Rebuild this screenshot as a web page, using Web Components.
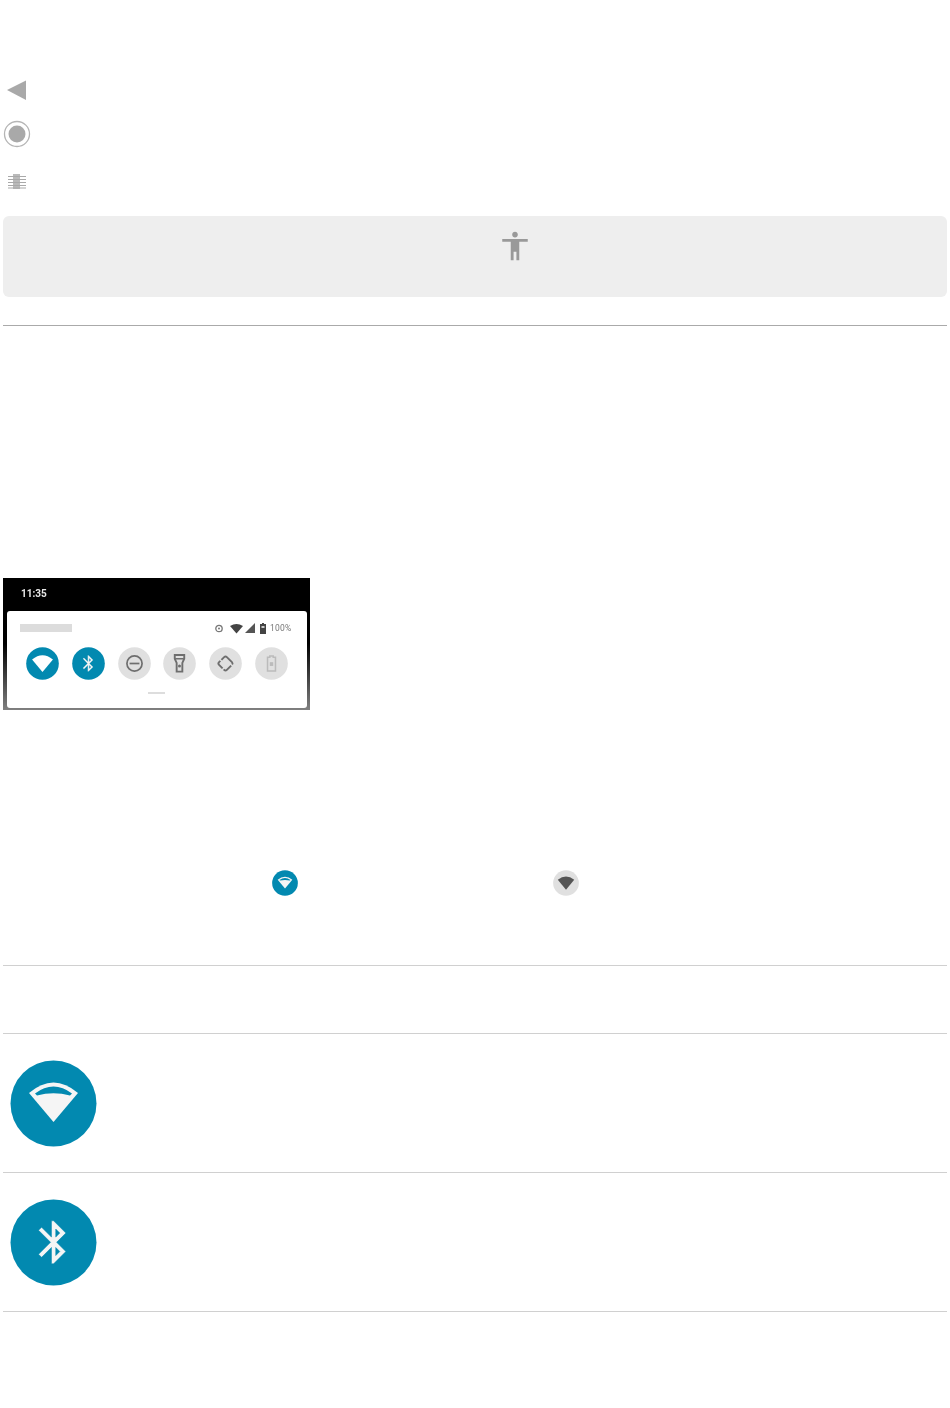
<!DOCTYPE html>
<html>
<head>
<meta charset="utf-8">
<title>Quick settings</title>
<style>
  html, body { margin: 0; padding: 0; background: #fff; }
  body { font-family: Roboto, "Liberation Sans", sans-serif; }
</style>
</head>
<body>
<help-page>
  <nav-icons></nav-icons>
  <note-box></note-box>
  <hr-line style="margin-top: 28px"></hr-line>
  <qs-shot></qs-shot>
  <inline-icons></inline-icons>
  <table-row height="67"></table-row>
  <table-row height="138"><round-icon kind="wifi" size="87"></round-icon></table-row>
  <table-row height="138"><round-icon kind="bluetooth" size="87"></round-icon></table-row>
</help-page>

<script>
const WIFI_FAN = 'M19 33Q43.5 12 68 33L43.5 62Z';
const BT_PATH = 'M17.71 7.71L12 2h-1v7.59L6.41 5 5 6.41 10.59 12 5 17.59 6.41 19 11 14.41V22h1l5.71-5.71-4.3-4.29 4.3-4.29zM13 5.83l1.88 1.88L13 9.59V5.83zm1.88 10.46L13 18.17v-3.76l1.88 1.88z';

class HelpPage extends HTMLElement {
  constructor() {
    super();
    this.attachShadow({ mode: 'open' });
    this.shadowRoot.innerHTML = `
      <style>
        :host { display: block; padding: 0 3px; height: 1408px; box-sizing: border-box; }
      </style>
      <slot></slot>
    `;
  }
}

class NavIcons extends HTMLElement {
  constructor() {
    super();
    this.attachShadow({ mode: 'open' });
    this.shadowRoot.innerHTML = `
      <style>
        :host { display: block; padding-top: 68px; }
        .row { height: 44px; display: flex; align-items: center; }
        .row.last { height: 50px; margin-bottom: 10px; }
        svg { width: 28px; height: 28px; display: block; filter: blur(.5px); }
      </style>
      <div class="row">
        <svg viewBox="0 0 28 28"><path d="M4 14L23 4.500V24Z" fill="#a9a9a9"/></svg>
      </div>
      <div class="row">
        <svg viewBox="0 0 28 28">
          <circle cx="14" cy="14" r="12.500" fill="none" stroke="#b5b5b5" stroke-width="1.300"/>
          <circle cx="14" cy="14" r="8.500" fill="#a9a9a9"/>
        </svg>
      </div>
      <div class="row last">
        <svg viewBox="0 0 28 28" fill="#a9a9a9">
          <rect x="10" y="7" width="7" height="15" opacity=".8"/>
          <rect x="5" y="9" width="18" height="1"/>
          <rect x="5" y="12" width="18" height="1"/>
          <rect x="5" y="15" width="18" height="1"/>
          <rect x="5" y="18" width="18" height="1"/>
          <rect x="5" y="20.500" width="18" height="1"/>
        </svg>
      </div>
    `;
  }
}

class NoteBox extends HTMLElement {
  constructor() {
    super();
    this.attachShadow({ mode: 'open' });
    this.shadowRoot.innerHTML = `
      <style>
        :host {
          display: block;
          box-sizing: border-box;
          height: 81px;
          padding: 13px 0 0 495px;
          background: #eeeeee;
          border-radius: 6px;
        }
        svg { width: 34px; height: 34px; display: block; filter: blur(.4px); }
      </style>
      <svg viewBox="0 0 24 24">
        <path fill="#999" d="M12 2c1.100 0 2 .9 2 2s-.9 2-2 2-2-.9-2-2 .9-2 2-2zm9 7h-6v13h-2v-6h-2v6H9V9H3V7h18v2z"/>
      </svg>
    `;
  }
}

class HrLine extends HTMLElement {
  constructor() {
    super();
    this.attachShadow({ mode: 'open' });
    this.shadowRoot.innerHTML = `
      <style>
        :host { display: block; height: 1px; background: #aaaaaa; }
      </style>
    `;
  }
}

class RoundIcon extends HTMLElement {
  constructor() {
    super();
    this.attachShadow({ mode: 'open' });
  }

  connectedCallback() {
    const kind = this.getAttribute('kind');
    const size = this.getAttribute('size') || 33;
    this.shadowRoot.innerHTML = `
      <style>
        :host { display: block; width: ${size}px; height: ${size}px; }
        svg { width: 100%; height: 100%; display: block; filter: blur(.4px); }
      </style>
      <svg viewBox="0 0 87 87">${this.drawing(kind)}</svg>
    `;
  }

  drawing(kind) {
    const teal = '<circle cx="43.500" cy="43.500" r="43" fill="#0289b0"/>';
    const grey = '<circle cx="43.500" cy="43.500" r="43" fill="#e0e0e0"/>';
    const dark = 'fill="none" stroke="#6e6e6e"';
    switch (kind) {
      case 'wifi':
        return teal + `<path d="${WIFI_FAN}" fill="#f5f5f5"/>
          <path d="M25 33.500Q43.500 19.600 62 33.500L60 35.500Q43.500 31 27 35.500Z" fill="#0289b0"/>`;
      case 'wifi-solid':
        return teal + `<path d="M16 33Q43.500 10 71 33L43.500 66Z" fill="#fff"/>`;
      case 'wifi-off':
        return grey + `<path d="M16 33Q43.500 10 71 33L43.500 66Z" fill="#555"/>`;
      case 'bluetooth':
        return teal + `<g transform="translate(17.800 17.500) scale(2.150)"><path d="${BT_PATH}" fill="#f5f5f5" stroke="#0289b0" stroke-width=".25"/></g>`;
      case 'dnd':
        return grey + `<circle cx="43.500" cy="43.500" r="20" ${dark} stroke-width="4.500"/>
          <path d="M30.500 43.500H56.500" ${dark} stroke-width="4.500"/>`;
      case 'flashlight':
        return grey + `<path d="M31 21H56V31L51 42V65H36V42L31 31Z" ${dark} stroke-width="5"/>
          <path d="M32 31H55" ${dark} stroke-width="4"/><circle cx="43.500" cy="50" r="4" fill="#6e6e6e"/>`;
      case 'rotate':
        return grey + `<rect x="29" y="29" width="29" height="29" rx="5" transform="rotate(45 43.500 43.500)"
          ${dark} stroke-width="5" stroke-dasharray="25 4"/>`;
      case 'battery':
        return grey + `<path d="M39 24H48V27H54V63H33V27H39Z" fill="none" stroke="#bbb" stroke-width="4"/>
          <rect x="39" y="40" width="9" height="10" fill="#bbb"/>`;
    }
    return grey;
  }
}

class QsShot extends HTMLElement {
  constructor() {
    super();
    this.attachShadow({ mode: 'open' });
    this.shadowRoot.innerHTML = `
      <style>
        :host {
          display: block;
          box-sizing: border-box;
          width: 307px;
          height: 132px;
          margin-top: 252px;
          padding: 0 3px 2px 4px;
          background: linear-gradient(#000 0, #000 50%, #808080 100%);
          filter: blur(.5px);
        }
        .time {
          box-sizing: border-box;
          height: 33px;
          padding: 0 0 2px 14px;
          display: flex;
          align-items: center;
          font: 700 10px Roboto, "Liberation Sans", sans-serif;
          color: #e8e8e8;
        }
        .card {
          box-sizing: border-box;
          height: 97px;
          padding: 10px 15px 0 13px;
          background: #fff;
          border-radius: 3px;
        }
        .head {
          height: 14px;
          display: flex;
          align-items: center;
        }
        .bar { width: 52px; height: 8px; background: #dcdcdc; margin-right: auto; }
        .head svg { height: 11px; display: block; flex: none; }
        .pct { margin-left: 4px; width: 22px; white-space: nowrap; font: 8.500px Roboto, "Liberation Sans", sans-serif; color: #777; letter-spacing: .2px; }
        .tiles {
          display: flex;
          gap: 12.800px;
          margin: 12px 0 0 6px;
        }
        .handle { width: 17px; height: 2px; margin: 12px auto 0; background: #dddddd; }
      </style>
      <div class="time">11:35</div>
      <div class="card">
        <div class="head">
          <div class="bar"></div>
          <svg viewBox="0 0 8 11" width="8"><circle cx="4" cy="5.500" r="3.200" fill="none" stroke="#777" stroke-width="1.300"/><circle cx="4" cy="5.500" r="1" fill="#777"/></svg>
          <svg viewBox="0 0 13 11" width="13" style="margin-left: 6.500px"><path d="M0 3Q6.500 -1 13 3L6.500 10.500Z" fill="#444"/></svg>
          <svg viewBox="0 0 10 11" width="10" style="margin-left: 2.500px"><path d="M10 0V10H0Z" fill="#555"/></svg>
          <svg viewBox="0 0 6 11" width="6" style="margin-left: 5px"><path d="M2 0H4V1H6V11H0V1H2Z" fill="#444"/><rect x="1.500" y="3" width="3" height="2" fill="#ccc"/></svg>
          <span class="pct">100%</span>
        </div>
        <div class="tiles">
          <round-icon kind="wifi-solid"></round-icon>
          <round-icon kind="bluetooth"></round-icon>
          <round-icon kind="dnd"></round-icon>
          <round-icon kind="flashlight"></round-icon>
          <round-icon kind="rotate"></round-icon>
          <round-icon kind="battery"></round-icon>
        </div>
        <div class="handle"></div>
      </div>
    `;
  }
}

class InlineIcons extends HTMLElement {
  constructor() {
    super();
    this.attachShadow({ mode: 'open' });
    this.shadowRoot.innerHTML = `
      <style>
        :host {
          display: flex;
          height: 256px;
          box-sizing: border-box;
          padding: 160px 0 0 269px;
          gap: 255px;
          border-bottom: 1px solid #d0d0d0;
        }
        round-icon { flex: none; }
      </style>
      <round-icon kind="wifi" size="26"></round-icon>
      <round-icon kind="wifi-off" size="26"></round-icon>
    `;
  }
}

class TableRow extends HTMLElement {
  constructor() {
    super();
    this.attachShadow({ mode: 'open' });
  }

  connectedCallback() {
    const h = this.getAttribute('height');
    this.shadowRoot.innerHTML = `
      <style>
        :host {
          display: flex;
          align-items: center;
          height: ${h}px;
          padding-left: 7px;
          border-bottom: 1px solid #d0d0d0;
        }
      </style>
      <slot></slot>
    `;
  }
}

customElements.define('help-page', HelpPage);
customElements.define('nav-icons', NavIcons);
customElements.define('note-box', NoteBox);
customElements.define('hr-line', HrLine);
customElements.define('round-icon', RoundIcon);
customElements.define('qs-shot', QsShot);
customElements.define('inline-icons', InlineIcons);
customElements.define('table-row', TableRow);
</script>
</body>
</html>
